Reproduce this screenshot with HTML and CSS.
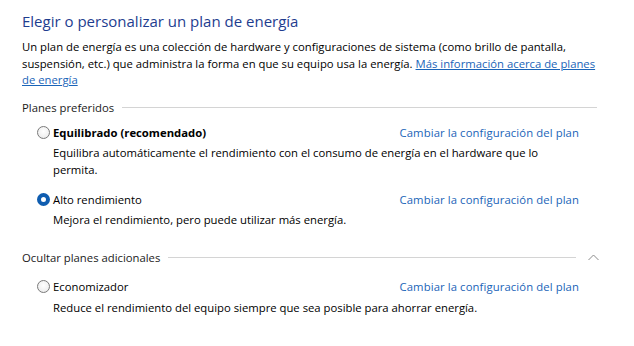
FILE: index.html
```html
<!DOCTYPE html>
<html lang="es">
<head>
<meta charset="utf-8">
<link rel="stylesheet" href="styles.css">
</head>
<body>
<div class="page">
  <h1 class="title">Elegir o personalizar un plan de energía</h1>
  <p class="intro">Un plan de energía es una colección de hardware y configuraciones de sistema (como brillo de pantalla, suspensión, etc.) que administra la forma en que su equipo usa la energía. <a class="link-u" href="#">Más información acerca de planes</a> <a class="link-u" href="#">de energía</a></p>

  <div class="group-head">
    <span class="group-label">Planes preferidos</span>
    <span class="rule"></span>
  </div>

  <div class="plan">
    <div class="plan-row">
      <span class="radio"></span>
      <span class="plan-name bold">Equilibrado (recomendado)</span>
      <a class="change" href="#">Cambiar la configuración del plan</a>
    </div>
    <p class="desc">Equilibra automáticamente el rendimiento con el consumo de energía en el hardware que lo permita.</p>
  </div>

  <div class="plan">
    <div class="plan-row">
      <span class="radio checked"></span>
      <span class="plan-name">Alto rendimiento</span>
      <a class="change" href="#">Cambiar la configuración del plan</a>
    </div>
    <p class="desc">Mejora el rendimiento, pero puede utilizar más energía.</p>
  </div>

  <div class="group-head group-2">
    <span class="group-label">Ocultar planes adicionales</span>
    <span class="rule short"></span>
    <svg class="chev" width="11" height="7" viewBox="0 0 11 7"><path d="M0.5 6 L5.5 1 L10.5 6" fill="none" stroke="#8a8a8a" stroke-width="1"/></svg>
  </div>

  <div class="plan">
    <div class="plan-row">
      <span class="radio"></span>
      <span class="plan-name">Economizador</span>
      <a class="change" href="#">Cambiar la configuración del plan</a>
    </div>
    <p class="desc">Reduce el rendimiento del equipo siempre que sea posible para ahorrar energía.</p>
  </div>
</div>
</body>
</html>
```

FILE: styles.css
```css
html, body {
  margin: 0;
  padding: 0;
  background: #ffffff;
}
body {
  font-family: "Open Sans", "Noto Sans", sans-serif;
  font-size: 11.3px;
  color: #000;
  width: 634px;
  height: 346px;
  overflow: hidden;
}
.page {
  padding: 10px 0 0 22px;
  width: 575px;
}
.title {
  margin: 0;
  font-weight: 400;
  font-size: 15px;
  line-height: 22px;
  color: #1e3d8f;
}
.intro {
  margin: 7px 0 0 0;
  line-height: 16.7px;
}
.link-u {
  color: #1a64b8;
  text-decoration: underline;
}
.group-head {
  display: flex;
  align-items: center;
  margin-top: 9px;
  height: 18px;
}
.group-label {
  color: #1a1a1a;
}
.rule {
  flex: 1;
  height: 1px;
  background: #d4d4d4;
  margin-left: 8px;
}
.rule.short {
  margin-right: 12px;
}
.chev {
  margin-right: -2px;
}
.plan {
  margin-top: 7px;
  padding-left: 15px;
}
.plan + .plan {
  margin-top: 12px;
}
.group-2 {
  margin-top: 20px;
}
.group-2 + .plan {
  margin-top: 11px;
}
.plan-row {
  display: flex;
  align-items: center;
  height: 18px;
}
.radio {
  box-sizing: border-box;
  width: 13px;
  height: 13px;
  border-radius: 50%;
  border: 1px solid #7a7a7a;
  background: radial-gradient(circle at 50% 40%, #ffffff 0%, #f1f1f1 60%, #e2e2e2 100%);
  margin-right: 3px;
  flex: none;
}
.radio.checked {
  border: 4px solid #0f5db0;
  background: #ffffff;
}
.plan-name {
  flex: 1;
}
.bold {
  font-weight: 700;
}
.change {
  color: #1a64b8;
  text-decoration: none;
  margin-right: 18px;
  white-space: nowrap;
  letter-spacing: 0.1px;
}
.desc {
  margin: 4px 0 0 16px;
  line-height: 16.5px;
  width: 500px;
}
```
